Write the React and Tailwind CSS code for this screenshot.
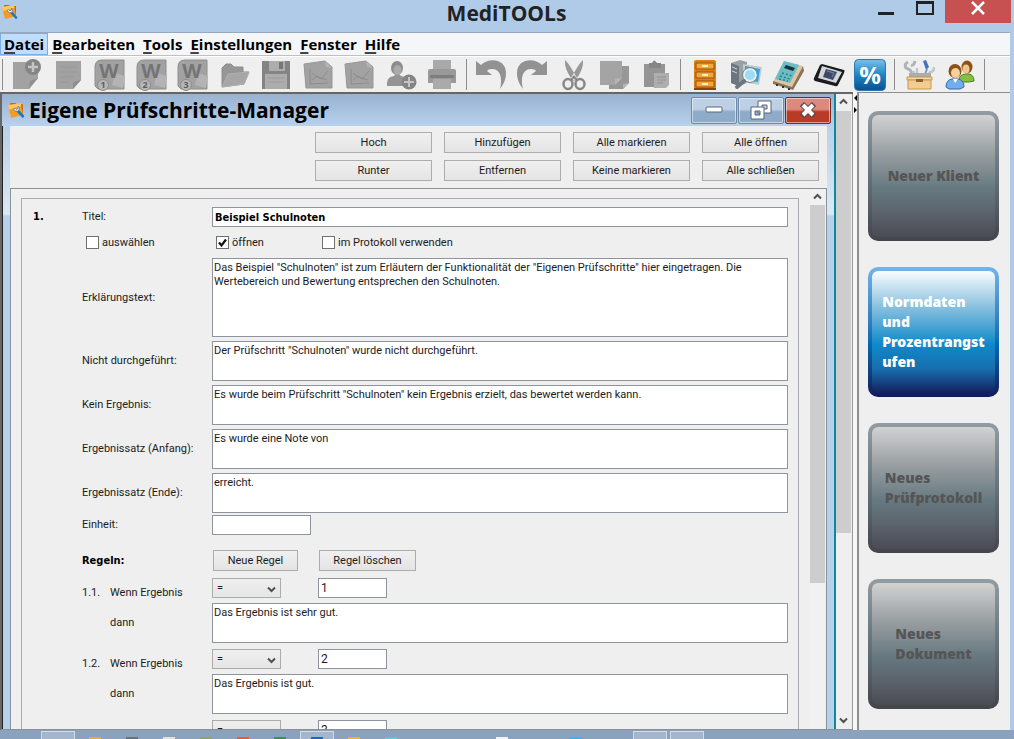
import { Fragment } from 'react';

const gray = '#a2a2a2';
const dark = '#878787';

const Svg = ({ children, className = 'w-8 h-8' }) => (
  <svg viewBox="0 0 32 32" className={className} aria-hidden="true">{children}</svg>
);

const AppLogo = ({ className }) => (
  <svg viewBox="0 0 16 16" className={className} aria-hidden="true">
    <path d="M2 1h5l1 1h6v9H3z" fill="#c8640c" />
    <path d="M0 3l12-2 2 11-11 3z" fill="#f59a23" />
    <path d="M0 3l12-2 .5 3L1 7z" fill="#ffc661" />
    <path d="M9 8l5 5.500" stroke="#1f78b4" strokeWidth="2.600" strokeLinecap="round" />
    <path d="M5.500 6a2.600 2.600 0 1 0 4-2v2l-1.500 1-1.400-1.600z" fill="#e8f2f7" stroke="#4d7893" strokeWidth=".7" />
  </svg>
);

const WordIcon = ({ n }) => (
  <Svg>
    <path d="M8 1h22v29H4L1 27V8q0-7 7-7z" fill={gray} stroke="#8e8e8e" />
    <path d="M21 14l10 3-2 12-11-3z" fill="#b3b3b3" />
    <text x="15" y="19" textAnchor="middle" fontFamily="Noto Sans" fontWeight="bold" fontSize="20" fill="#747474">W</text>
    <circle cx="9" cy="26" r="5.500" fill="#b6b6b6" stroke="#8e8e8e" />
    <text x="9" y="29" textAnchor="middle" fontFamily="Noto Sans" fontWeight="bold" fontSize="9" fill="#5f5f5f">{n}</text>
  </Svg>
);

const ChartIcon = () => (
  <Svg>
    <path d="M2 5l21-3 7 6v21L4 29z" fill={gray} stroke="#979797" />
    <path d="M23 2l1 6 6 1" fill="#b4b4b4" />
    <path d="M8 10v15l18-1M10 21l5-4 4 3 7-8M10 14l5 4 10 3" fill="none" stroke={dark} strokeWidth=".8" />
  </Svg>
);

const fileTools = [
  ['Neu', <Svg key="i">
    <path d="M2 3h25v16l-9 11H2z" fill={gray} />
    <path d="M27 19l-9 11 1-8z" fill="#8f8f8f" />
    <circle cx="22" cy="8" r="8" fill="#858585" />
    <path d="M22 3v10M17 8h10" stroke="#c4c4c4" strokeWidth="2.500" />
  </Svg>],
  ['Dokument', <Svg key="i">
    <path d="M3 2h25v19l-8 9H3z" fill={gray} />
    <path d="M28 21l-8 9v-7z" fill="#8f8f8f" />
    <path d="M7 8h17M7 13h17M7 18h14M7 23h9" stroke="#989898" />
  </Svg>],
  ['Word 1', <WordIcon key="i" n="1" />],
  ['Word 2', <WordIcon key="i" n="2" />],
  ['Word 3', <WordIcon key="i" n="3" />],
  ['Öffnen', <Svg key="i">
    <path d="M3 9l4-4h5l3 3h9v5h6l-5 12-22 3z" fill="#969696" stroke="#8c8c8c" />
    <path d="M9 15l21-2-5 12-22 3z" fill="#a6a6a6" stroke="#b4b4b4" strokeWidth=".8" />
  </Svg>],
  ['Speichern', <Svg key="i">
    <path d="M2 2h28v28H2z" fill="#848484" />
    <path d="M9 2h16v10H9z" fill="#adadad" />
    <path d="M19 3h4v7h-4z" fill="#777" />
    <path d="M5 15h22v15H5z" fill="#acacac" />
    <path d="M8 19h16M8 23h16" stroke="#9c9c9c" />
  </Svg>],
  ['Diagramm', <ChartIcon key="i" />],
  ['Verlauf', <ChartIcon key="i" />],
  ['Klient hinzufügen', <Svg key="i">
    <path d="M2 24q0-6 7-7l2-2h3l2 2q6 1 6 7v3H2z" fill="#949494" />
    <ellipse cx="12" cy="9" rx="6" ry="7" fill="#8c8c8c" />
    <ellipse cx="12.500" cy="11" rx="4" ry="5" fill="#aaa" />
    <circle cx="24" cy="23" r="7.500" fill="#858585" />
    <path d="M24 18v10M19 23h10" stroke="#c4c4c4" strokeWidth="2" />
  </Svg>],
  ['Drucken', <Svg key="i">
    <path d="M7 1h18v12H7z" fill="#a9a9a9" />
    <path d="M2 12q0-2 2-2h24q2 0 2 2v12H2z" fill="#999" />
    <path d="M4 16h24v3H4z" fill="#7d7d7d" />
    <path d="M7 20h18v10H7z" fill="#aaa" />
  </Svg>],
];

const editTools = [
  ['Rückgängig', <Svg key="i">
    <path d="M1 2l5 4C14-2 31 0 31 14c0 7-3 12-6 16 2-8 2-20-8-20q-4 0-5 2l5 4H1z" fill="#929292" />
  </Svg>],
  ['Wiederholen', <Svg key="i">
    <path d="M31 2l-5 4C18-2 1 0 1 14c0 7 3 12 6 16-2-8-2-20 8-20q4 0 5 2l-5 4h16z" fill="#929292" />
  </Svg>],
  ['Ausschneiden', <Svg key="i">
    <path d="M7 1q3 2 12 18l-4 3Q6 10 7 1zM25 1q-3 2-12 18l4 3Q26 10 25 1z" fill="#989898" />
    <ellipse cx="10" cy="25" rx="4.500" ry="5" fill="none" stroke={dark} strokeWidth="2.500" />
    <ellipse cx="22" cy="25" rx="4.500" ry="5" fill="none" stroke={dark} strokeWidth="2.500" />
    <path d="M13 21l4-4M19 21l-4-4" stroke={dark} strokeWidth="2" />
  </Svg>],
  ['Kopieren', <Svg key="i">
    <path d="M10 7h20v17l-6 6H10z" fill="#979797" />
    <path d="M1 2h22v17l-7 7H1z" fill="#a4a4a4" />
    <path d="M23 19l-7 7v-6zM30 24l-6 6v-5z" fill="#b5b5b5" />
  </Svg>],
  ['Einfügen', <Svg key="i">
    <path d="M4 5h21v23H4z" fill="#949494" />
    <path d="M9 4h3q2-5 5 0h4v5H9z" fill="#858585" />
    <path d="M14 14h15v12l-3 3H14z" fill="#aeaeae" />
    <path d="M17 18h9M17 21h9M17 24h6" stroke="#929292" />
  </Svg>],
];

const deviceTools = [
  ['Archiv', <Svg key="i">
    <path d="M5 2l2-1h18l2 1v27H5z" fill="#d97f17" />
    <path d="M5 29h22v2H5z" fill="#8a4508" />
    <path d="M7 4h18v6H7zM7 13h18v6H7zM7 22h18v6H7z" fill="#f5a63a" stroke="#9b520b" />
    <path d="M13 7h6M13 16h6M13 25h6" stroke="#fff0c4" strokeWidth="2" />
  </Svg>],
  ['Suche', <Svg key="i">
    <path d="M1 4l9-3 7 2v21l-8 3-8-3z" fill="#98a0a6" />
    <path d="M1 4l8 3v20l-8-3z" fill="#6d767d" />
    <path d="M2 8l5 2M2 12l5 2" stroke="#ccd3d8" />
    <path d="M13 5l19 3-3 18-16-3z" fill="#c3c9cd" />
    <path d="M15 7l15 3-2 13-13-2z" fill="#2aa7e6" />
    <circle cx="20" cy="16" r="6" fill="#9cdcf5" stroke="#e7edf0" strokeWidth="2" />
    <circle cx="20" cy="16" r="7.500" fill="none" stroke="#7d8990" />
    <path d="M14 22l-7 6" stroke="#6b7780" strokeWidth="4" strokeLinecap="round" />
  </Svg>],
  ['Messgerät', <Svg key="i">
    <path d="M12 2l19 5-11 23L1 23z" fill="#dbc7a5" />
    <path d="M31 7l1 5-11 19-20-6v-3l19 6z" fill="#8c7357" />
    <path d="M12 2l15 4-9 18-15-4z" fill="#6bbcc4" />
    <path d="M14 6l9 3-2 3-9-3z" fill="#16333a" />
    <path d="M10 14l10 3M8 17l10 3M7 20l9 2" stroke="#2a7d8c" strokeWidth="1.500" strokeDasharray="2 2" />
    <path d="M4 26h2M10 28h2M16 30h2" stroke="#333" strokeWidth="2" />
  </Svg>],
  ['Tablet', <Svg key="i">
    <path d="M9 5l22 6q1 0 0 3l-6 12q-1 2-3 1L2 22q-2-1-1-3l6-13z" fill="#1b1b1d" />
    <path d="M9 7l20 6-6 11-18-5z" fill="#d4d5da" />
    <path d="M13 10l11 3-4 8-10-3z" fill="#3e4965" />
    <path d="M14 12l7 2-2 4" fill="none" stroke="#7a87ad" />
  </Svg>],
  ['Prozentrang', <Svg key="i">
    <defs>
      <linearGradient id="pct" x1="0" y1="0" x2="0" y2="1">
        <stop offset="0" stopColor="#7cc0e6" />
        <stop offset=".5" stopColor="#1d84c4" />
        <stop offset="1" stopColor="#0b4f92" />
      </linearGradient>
    </defs>
    <rect x="0.500" y="0.500" width="31" height="31" rx="4" fill="url(#pct)" stroke="#2a78b4" />
    <text x="16" y="25" textAnchor="middle" fontFamily="Noto Sans" fontWeight="bold" fontSize="24" fill="#fff">%</text>
  </Svg>],
];

const userTools = [
  ['Werkzeuge', <Svg key="i">
    <path d="M5 3q-4 2-2 6l4 2 5 8M12 2q-1 5-4 4" fill="none" stroke="#aeb3b7" strokeWidth="3" />
    <path d="M20 2l3-1 3 7-3 3z" fill="#3d74c7" />
    <path d="M24 10l-3 8" stroke="#8e959b" strokeWidth="2" />
    <path d="M31 8q0 5-4 5l-4 6M14 9v9M10 12l3 7" fill="none" stroke="#c0c5c9" strokeWidth="2.500" />
    <path d="M6 14h22v5H6z" fill="#a9adb0" />
    <path d="M4 18h25v3H4z" fill="#f7d9a3" stroke="#c9964e" />
    <path d="M5 21h23v9H5z" fill="#f3cd90" stroke="#c9964e" />
    <path d="M13 20h7v3h-7z" fill="#8a6430" />
  </Svg>],
  ['Benutzer', <Svg key="i">
    <path d="M15 21q0-5 6-6h4q5 1 5 7l-5 1H15z" fill="#86bd45" stroke="#4f8420" />
    <ellipse cx="23" cy="8" rx="5.500" ry="6.500" fill="#8a5216" />
    <ellipse cx="22" cy="10" rx="3.500" ry="4.500" fill="#f1c48e" />
    <path d="M2 28q0-7 6-8h6q6 1 6 8l-4 2H5z" fill="#74aeea" stroke="#2f6bb5" />
    <path d="M9 20l2 4 3-4z" fill="#fff" />
    <ellipse cx="11" cy="12" rx="6.500" ry="7" fill="#8a5216" />
    <ellipse cx="11.500" cy="14" rx="4.500" ry="5" fill="#f6cf9d" />
  </Svg>],
];

const toolGroups = [
  { width: 'w-[447px]', tools: fileTools, disabled: true },
  { width: 'w-[197px]', tools: editTools, disabled: true },
  { width: 'w-[197px]', tools: deviceTools },
  { width: 'w-[73px]', tools: userTools },
];

const menu = ['Datei', 'Bearbeiten', 'Tools', 'Einstellungen', 'Fenster', 'Hilfe'];

const stepButtons = [
  'Hoch', 'Hinzufügen', 'Alle markieren', 'Alle öffnen',
  'Runter', 'Entfernen', 'Keine markieren', 'Alle schließen',
];

const fields = [
  { id: 'erklaerung', label: 'Erklärungstext:', height: 'h-[79px]', text: 'Das Beispiel "Schulnoten" ist zum Erläutern der Funktionalität der "Eigenen Prüfschritte" hier eingetragen. Die\nWertebereich und Bewertung entsprechen den Schulnoten.' },
  { id: 'nicht', label: 'Nicht durchgeführt:', height: 'h-10', text: 'Der Prüfschritt "Schulnoten" wurde nicht durchgeführt.' },
  { id: 'kein', label: 'Kein Ergebnis:', height: 'h-10', text: 'Es wurde beim Prüfschritt "Schulnoten" kein Ergebnis erzielt, das bewertet werden kann.' },
  { id: 'anfang', label: 'Ergebnissatz (Anfang):', height: 'h-10', text: 'Es wurde eine Note von' },
  { id: 'ende', label: 'Ergebnissatz (Ende):', height: 'h-10', text: 'erreicht.' },
];

const rules = [
  { value: '1', text: 'Das Ergebnis ist sehr gut.' },
  { value: '2', text: 'Das Ergebnis ist gut.' },
  { value: '3', text: 'Das Ergebnis ist befriedigend.' },
];

const tiles = [
  { lines: ['Neuer Klient'] },
  { lines: ['Normdaten', 'und', 'Prozentrangst', 'ufen'], active: true },
  { lines: ['Neues', 'Prüfprotokoll'] },
  { lines: ['Neues', 'Dokument'] },
];

const taskbar = [
  '', '', 'bg-[#e8a84c]', 'bg-[#66727e]', 'bg-[#e4e0d6]', 'bg-[#8ea85a]', 'bg-[#f05a28]',
  'bg-[#3f9142]', 'bg-[#2464bc]', 'bg-[#f0b323]', 'bg-[#63c5cf]', '', '', 'bg-[#f2f2f2]', '', 'bg-[#35b6e6]', '', '', '',
];
const openTasks = [1, 8, 17, 18];

const inputClass = 'bg-white border border-[#8f939f] outline-none';
const areaClass = 'block w-full resize-none overflow-hidden px-[1px] py-[2px] leading-[14px]';
const buttonClass = 'h-[21px] border border-[#adadad] bg-linear-to-b from-[#f0f0f0] to-[#e4e4e4] text-center';
const boldClass = "font-['DejaVu_Sans_Condensed','Noto_Sans',sans-serif] font-bold text-black";

function Check({ label, checked }) {
  return (
    <label className="flex items-center gap-[3px]">
      <span className="relative flex">
        <input type="checkbox" defaultChecked={checked} className="peer appearance-none w-[13px] h-[13px] bg-white border border-[#707070]" />
        <svg viewBox="0 0 13 13" className="absolute inset-0 w-[13px] h-[13px] hidden peer-checked:block pointer-events-none">
          <path d="M3 6.500l2.500 3L10 3.500" fill="none" stroke="#111" strokeWidth="2.200" />
        </svg>
      </span>
      {label}
    </label>
  );
}

function Arrow({ up }) {
  return (
    <svg viewBox="0 0 15 15" className="w-[15px] h-[15px]" aria-hidden="true">
      <path d={up ? 'M4 9.500L7.500 6 11 9.500' : 'M4 5.500L7.500 9 11 5.500'} fill="none" stroke="#505050" strokeWidth="2" />
    </svg>
  );
}

function Rule({ index, rule }) {
  return (
    <div className="mb-[6px]">
      <div className="flex h-[25px]">
        <span className="w-7 leading-5 self-end">1.{index}.</span>
        <label htmlFor={`op-${index}`} className="w-[102px] leading-5 self-end">Wenn Ergebnis</label>
        <div className="relative w-[69px] h-5">
          <select id={`op-${index}`} className="appearance-none w-full h-full pl-1 border border-[#acacac] bg-linear-to-b from-[#efefef] to-[#e5e5e5]">
            <option>=</option>
            <option>&lt;</option>
            <option>&gt;</option>
          </select>
          <span className="absolute right-[2px] top-[4px] pointer-events-none"><Arrow /></span>
        </div>
        <input aria-label={`Wert ${index}`} defaultValue={rule.value} className={`${inputClass} ml-[37px] w-[69px] h-5 px-[2px] text-xs`} />
      </div>
      <div className="flex items-center">
        <label htmlFor={`dann-${index}`} className="w-[102px] ml-7">dann</label>
        <div className="flex-1">
          <textarea id={`dann-${index}`} defaultValue={rule.text} className={`${inputClass} ${areaClass} h-10`} />
        </div>
      </div>
    </div>
  );
}

function TestStep() {
  return (
    <section className="border border-[#a8acb2] ml-[10px] mt-[9px] mr-[11px] flex-1 self-start pl-[11px] pr-[10px] pt-2">
      <div className="flex">
        <span className={`w-[49px] leading-5 ${boldClass}`}>1.</span>
        <div className="flex-1">
          <div className="flex items-center">
            <label htmlFor="titel" className="w-[130px]">Titel:</label>
            <input id="titel" defaultValue="Beispiel Schulnoten" className={`${inputClass} ${boldClass} flex-1 h-5 px-[2px]`} />
          </div>
          <div className="flex items-center h-[31px]">
            <div className="w-[130px] pl-1"><Check label="auswählen" /></div>
            <div className="w-[106px] pl-1"><Check label="öffnen" checked /></div>
            <div className="pl-1"><Check label="im Protokoll verwenden" /></div>
          </div>
          <div className="flex flex-col gap-1">
            {fields.map((f) => (
              <div key={f.id} className="flex items-center">
                <label htmlFor={f.id} className="w-[130px]">{f.label}</label>
                <div className="flex-1">
                  <textarea id={f.id} defaultValue={f.text} className={`${inputClass} ${areaClass} ${f.height}`} />
                </div>
              </div>
            ))}
          </div>
          <div className="flex items-center mt-[2px]">
            <label htmlFor="einheit" className="w-[130px]">Einheit:</label>
            <input id="einheit" className={`${inputClass} w-[99px] h-5 px-[2px]`} />
          </div>
          <div className="flex items-center mt-[15px] mb-[7px]">
            <span className={`w-[131px] ${boldClass}`}>Regeln:</span>
            <button className={`${buttonClass} w-[85px]`}>Neue Regel</button>
            <button className={`${buttonClass} w-[97px] ml-[21px]`}>Regel löschen</button>
          </div>
          {rules.map((rule, i) => <Rule key={rule.value} index={i + 1} rule={rule} />)}
        </div>
      </div>
    </section>
  );
}

function ManagerWindow() {
  const control = 'flex items-center justify-center w-[46px] h-[27px] border rounded-[2px] shadow-[inset_0_0_0_1px_rgba(255,255,255,0.5)]';
  const blueControl = `${control} border-[#6f89a8] bg-linear-to-b from-[#bdd0e6] from-45% to-[#8fabca] to-55%`;
  return (
    <div className="flex-1 min-w-0 flex flex-col border-r-2 border-[#0a8a9c]">
      <header className="flex items-center h-8 shrink-0 pl-[6px] pr-[3px] bg-linear-to-b from-[#98b2d0] to-[#b7d1ee]">
        <AppLogo className="w-[17px] h-[17px]" />
        <h2 className="ml-1 font-bold text-[21px] leading-8 text-black font-['Open_Sans','Noto_Sans',sans-serif]">Eigene Prüfschritte-Manager</h2>
        <div className="ml-auto flex gap-px">
          <button aria-label="Minimieren" className={blueControl}>
            <svg viewBox="0 0 18 8" className="w-[18px] h-2"><rect x="1" y="1" width="16" height="5" rx="1" fill="#fff" stroke="#5a6675" /></svg>
          </button>
          <button aria-label="Wiederherstellen" className={blueControl}>
            <svg viewBox="0 0 22 20" className="w-[22px] h-5" fillRule="evenodd" fill="#fff" stroke="#5a6675">
              <path d="M8 1h13v12H8zM12 5v4h5V5z" />
              <path d="M1 7h13v12H1zM5 11v4h5v-4z" />
            </svg>
          </button>
          <button aria-label="Schließen" className={`${control} border-[#7b2a22] bg-linear-to-b from-[#dc8a7e] from-45% to-[#b93a25] to-55%`}>
            <svg viewBox="0 0 18 16" className="w-[18px] h-4">
              <path d="M3 2l12 12M15 2L3 14" stroke="#5a4a4a" strokeWidth="6" />
              <path d="M4 3l10 10M14 3L4 13" stroke="#fff" strokeWidth="4" />
            </svg>
          </button>
        </div>
      </header>
      <div className="flex-1 min-h-0 flex flex-col border-l border-[#222]">
        <div className="flex-1 min-h-0 flex flex-col px-[7px] bg-[linear-gradient(#b8d1ea,#dce8f5_88px,#b8d1ea_90px)]">
          <div className="flex flex-col flex-1 min-h-0 bg-[#efefef]">
            <div className="grid grid-cols-[repeat(4,117px)] justify-end gap-x-3 gap-y-[7px] pt-[6px] pb-[7px] pr-2">
              {stepButtons.map((name) => (
                <button key={name} className={name === 'Hoch' ? `${buttonClass} border-[#8fa9c6]` : buttonClass}>{name}</button>
              ))}
            </div>
            <div className="flex flex-1 min-h-0 overflow-hidden border border-b-0 border-[#8a929c]">
              <TestStep />
              <div className="w-[15px] shrink-0 flex flex-col bg-[#f1f1f1] mr-px">
                <div className="h-4"><Arrow up /></div>
                <div className="h-[378px] bg-[#cdcdcd]" />
              </div>
            </div>
          </div>
        </div>
      </div>
    </div>
  );
}

function Tile({ tile }) {
  return (
    <button className={`w-[131px] h-[130px] p-1 rounded-[10px] bg-linear-to-b ${tile.active
      ? 'from-[#74b4e8] via-[#0068ae] via-60% to-[#101c58]'
      : 'from-[#929ca2] via-[#5d6a72] via-60% to-[#44444d]'
    }`}>
      <span className={`flex items-center justify-center w-full h-full rounded-md ${tile.active
        ? 'text-white bg-[linear-gradient(#fafdff,#8fc3e0_28%,#0f8aca_60%,#176fae_80%,#14205e)]'
        : 'text-[#555] bg-[linear-gradient(#d2d2d2,#9ba0a3_30%,#667980_60%,#5c636d_80%,#4b4b53)]'
      }`}>
        <span className="text-left text-sm leading-5 font-black font-['Noto_Sans',sans-serif] whitespace-nowrap">
          {tile.lines.map((line) => <Fragment key={line}>{line}<br /></Fragment>)}
        </span>
      </span>
    </button>
  );
}

export default function App() {
  return (
    <div className="h-screen flex flex-col overflow-hidden bg-[#b0cbe8] text-[11px] leading-[14px] text-[#1c1c1c] font-['Roboto','Noto_Sans',sans-serif]">
      {/* Titelleiste */}
      <header className="grid grid-cols-[1fr_auto_1fr] items-start h-8 shrink-0 pl-[2px] pr-[3px]">
        <AppLogo className="w-4 h-4 mt-1" />
        <h1 className="font-bold text-[21px] leading-[26px] text-[#222] font-['Open_Sans','Noto_Sans',sans-serif]">MediTOOLs</h1>
        <div className="flex justify-end">
          <button aria-label="Minimieren" className="w-[38px] h-[22px] flex justify-center">
            <span className="w-4 h-[3px] mt-3 bg-[#222]" />
          </button>
          <button aria-label="Maximieren" className="w-10 h-[22px] flex justify-center">
            <span className="w-[18px] h-[14px] mt-px border-2 border-t-[3px] border-[#222]" />
          </button>
          <button aria-label="Schließen" className="w-[66px] h-[23px] flex justify-center bg-[#c75050]">
            <svg viewBox="0 0 14 14" className="w-[14px] h-[14px] mt-px"><path d="M1 1l12 12M13 1L1 13" stroke="#fff" strokeWidth="2.500" /></svg>
          </button>
        </div>
      </header>

      <div className="flex-1 min-h-0 flex flex-col mr-1 border-t border-[#93a9c4] bg-[#efefef]">
        {/* Menü */}
        <nav className="flex h-[23px] shrink-0 bg-[#f5f6f8] border-b border-[#c0c0c0] text-[15px] leading-[22px] font-bold text-black font-['Open_Sans','Noto_Sans',sans-serif]">
          {menu.map((item, i) => (
            <button key={item} className={i === 0 ? 'px-[3px] border border-[#7aaee6] bg-[#c2dcfa] leading-5' : 'px-1'}>
              <span className="underline underline-offset-2 decoration-2 decoration-[#444]">{item[0]}</span>{item.slice(1)}
            </button>
          ))}
        </nav>

        {/* Werkzeugleiste */}
        <div className="flex items-center h-9 shrink-0 pl-[2px] border-t border-white">
          {toolGroups.map((group) => (
            <Fragment key={group.tools[0][0]}>
              <span className="w-px h-[31px] bg-[#8c8c8c]" />
              <div className={`flex justify-between mx-2 ${group.width}`}>
                {group.tools.map(([name, icon]) => (
                  <button key={name} title={name} disabled={group.disabled}>{icon}</button>
                ))}
              </div>
            </Fragment>
          ))}
          <span className="w-px h-[31px] bg-[#8c8c8c]" />
        </div>

        <div className="flex flex-1 min-h-0">
          <div className="flex flex-1 min-w-0 border-t-2 border-l-2 border-[#666] border-b border-b-[#8b8f96]">
            <ManagerWindow />
            <div className="w-[15px] shrink-0 flex flex-col bg-[#efefef]">
              <div className="h-[17px]"><Arrow up /></div>
              <div className="h-[422px] bg-[#cdcdcd]" />
              <div className="mt-auto mb-px"><Arrow /></div>
            </div>
            <div className="w-px bg-[#999] ml-px" />
          </div>
          <div className="w-1 bg-[#f7f7f7]">
            <svg viewBox="0 0 4 24" className="w-1 h-6"><path d="M4 3v6L1 6zM1 15v6l3-3z" fill="#000" /></svg>
          </div>
          <aside className="w-[153px] shrink-0 flex flex-col items-start gap-[26px] pl-[9px] pt-[18px] border-l-2 border-t border-[#8e8e8e]">
            {tiles.map((tile) => <Tile key={tile.lines.join('')} tile={tile} />)}
          </aside>
        </div>
      </div>

      {/* Taskleiste */}
      <footer className="flex h-[9px] shrink-0 overflow-hidden gap-[3px] pl-1 pt-px bg-[#8aa2bd]">
        {taskbar.map((color, i) => (
          <span key={i} className={`flex w-[34px] justify-center items-end h-2 ${openTasks.includes(i) ? 'border border-b-0 border-[#cfdbe8] bg-[#a3b6cb]' : ''}`}>
            <span className={`w-3 h-[2px] ${color}`} />
          </span>
        ))}
      </footer>
    </div>
  );
}
